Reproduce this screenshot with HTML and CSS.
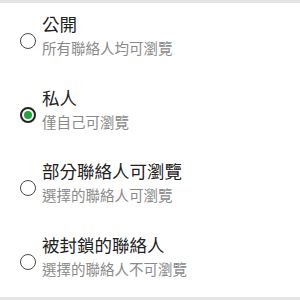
FILE: index.html
```html
<!DOCTYPE html>
<html>
<head>
<meta charset="utf-8">
<link rel="stylesheet" href="styles.css">
</head>
<body>
<div class="panel">
  <div class="row">
    <span class="radio"></span>
    <div class="text">
      <div class="title">公開</div>
      <div class="sub">所有聯絡人均可瀏覽</div>
    </div>
  </div>
  <div class="row">
    <span class="radio checked"></span>
    <div class="text">
      <div class="title">私人</div>
      <div class="sub">僅自己可瀏覽</div>
    </div>
  </div>
  <div class="row">
    <span class="radio"></span>
    <div class="text">
      <div class="title">部分聯絡人可瀏覽</div>
      <div class="sub">選擇的聯絡人可瀏覽</div>
    </div>
  </div>
  <div class="row">
    <span class="radio"></span>
    <div class="text">
      <div class="title">被封鎖的聯絡人</div>
      <div class="sub">選擇的聯絡人不可瀏覽</div>
    </div>
  </div>
</div>
</body>
</html>
```
FILE: styles.css
```css
html, body {
  margin: 0;
  padding: 0;
  background: #ffffff;
}
body {
  font-family: "Noto Sans CJK TC", "Noto Sans", sans-serif;
  width: 300px;
  height: 300px;
  overflow: hidden;
}
.panel {
  border-top: 3px solid #e4e4e4;
  border-bottom: 3px solid #e4e4e4;
  height: 294px;
  display: flex;
  flex-direction: column;
}
.row {
  height: 73.5px;
  display: flex;
  align-items: flex-start;
  box-sizing: border-box;
  padding-top: 8px;
}
.radio {
  width: 16px;
  height: 16px;
  box-sizing: border-box;
  border: 1.6px solid #4a4a4a;
  border-radius: 50%;
  margin-left: 20px;
  margin-right: 6px;
  margin-top: 22px;
  flex: none;
  display: flex;
  align-items: center;
  justify-content: center;
}
.radio.checked {
  border: 2px solid #222;
}
.radio.checked::after {
  content: "";
  width: 8px;
  height: 8px;
  border-radius: 50%;
  background: #22a33c;
}
.text {
  display: flex;
  flex-direction: column;
}
.title {
  font-size: 17.5px;
  line-height: 25px;
  color: #222222;
}
.sub {
  font-size: 14.5px;
  line-height: 24px;
  color: #8a8a8a;
}
```
